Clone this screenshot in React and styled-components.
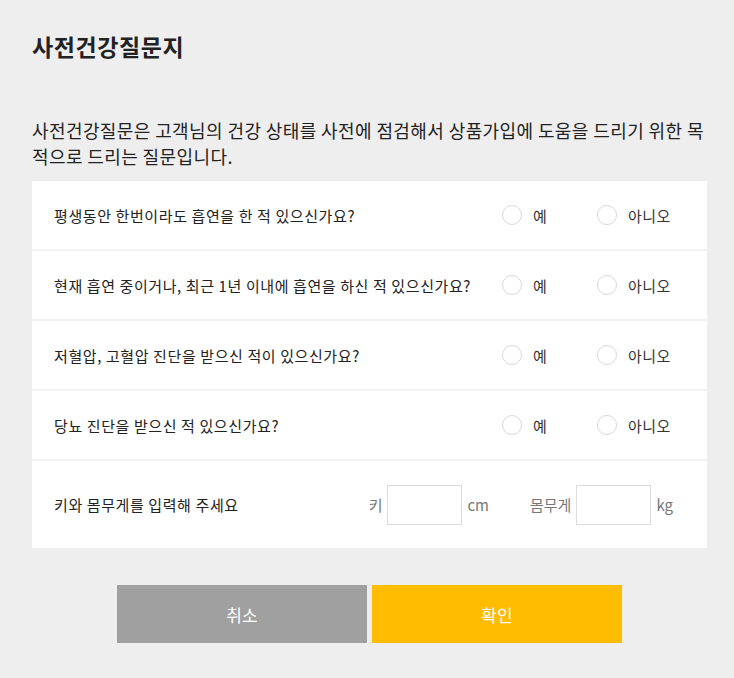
import React, { useState } from 'react';
import styled, { createGlobalStyle } from 'styled-components';

const GlobalStyle = createGlobalStyle`
  body {
    margin: 0;
    background: #eeeeee;
    font-family: "Noto Sans CJK KR", "Noto Sans", sans-serif;
    color: #222;
  }
`;

const QUESTIONS = [
  '평생동안 한번이라도 흡연을 한 적 있으신가요?',
  '현재 흡연 중이거나, 최근 1년 이내에 흡연을 하신 적 있으신가요?',
  '저혈압, 고혈압 진단을 받으신 적이 있으신가요?',
  '당뇨 진단을 받으신 적 있으신가요?',
];

export default function App() {
  const [answers, setAnswers] = useState({});

  return (
    <Page>
      <GlobalStyle />
      <Title>사전건강질문지</Title>
      <Desc>
        사전건강질문은 고객님의 건강 상태를 사전에 점검해서 상품가입에 도움을 드리기 위한 목적으로 드리는 질문입니다.
      </Desc>
      <Card>
        {QUESTIONS.map((q, i) => (
          <Row key={i}>
            <Question>{q}</Question>
            <Options>
              <Option wide>
                <Radio
                  type="radio"
                  name={`q${i}`}
                  checked={answers[i] === 'y'}
                  onChange={() => setAnswers({ ...answers, [i]: 'y' })}
                />
                예
              </Option>
              <Option>
                <Radio
                  type="radio"
                  name={`q${i}`}
                  checked={answers[i] === 'n'}
                  onChange={() => setAnswers({ ...answers, [i]: 'n' })}
                />
                아니오
              </Option>
            </Options>
          </Row>
        ))}
        <Row tall>
          <Question>키와 몸무게를 입력해 주세요</Question>
          <Measures>
            <Unit>키</Unit>
            <NumInput />
            <Unit>cm</Unit>
            <Unit spaced>몸무게</Unit>
            <NumInput />
            <Unit>kg</Unit>
          </Measures>
        </Row>
      </Card>
      <Buttons>
        <Button>취소</Button>
        <Button primary>확인</Button>
      </Buttons>
    </Page>
  );
}

const Page = styled.div`
  width: 675px;
  padding: 31px 27px 35px 32px;
`;

const Title = styled.h1`
  margin: 0;
  font-size: 23px;
  line-height: 30px;
  font-weight: 700;
  color: #222;
  letter-spacing: 0.6px;
`;

const Desc = styled.p`
  margin: 56px 0 12px;
  font-size: 18px;
  line-height: 26px;
  color: #222;
  letter-spacing: 0.4px;
  word-break: break-all;
`;

const Card = styled.div`
  background: #fff;
`;

const Row = styled.div`
  display: flex;
  align-items: center;
  height: ${props => (props.tall ? '87px' : '68px')};
  padding: 0 0 0 22px;
  border-bottom: ${props => (props.tall ? 'none' : '2px solid #f2f2f2')};
`;

const Question = styled.div`
  flex: 1;
  font-size: 15px;
  color: #222;
  letter-spacing: 0.6px;
`;

const Options = styled.div`
  display: flex;
  width: 170px;
  margin-right: 35px;
`;

const Option = styled.label`
  display: flex;
  align-items: center;
  gap: 11px;
  width: ${props => (props.wide ? '95px' : '75px')};
  font-size: 15px;
  letter-spacing: 0.4px;
  color: #333;
  cursor: pointer;
`;

const Radio = styled.input`
  appearance: none;
  margin: 0;
  width: 20px;
  height: 20px;
  border: 1px solid #d9d9d9;
  border-radius: 50%;
  background: #fff;
  box-sizing: border-box;
  cursor: pointer;

  &:checked {
    border: 6px solid #ffbc00;
  }
`;

const Measures = styled.div`
  display: flex;
  align-items: center;
  gap: 5px;
  margin-right: 34px;
`;

const Unit = styled.span`
  font-size: 15px;
  color: #777;
  margin-left: ${props => (props.spaced ? '36px' : '0')};
`;

const NumInput = styled.input`
  width: 75px;
  height: 40px;
  box-sizing: border-box;
  border: 1px solid #dcdcdc;
  padding: 0 8px;
  font-size: 15px;
  font-family: inherit;
  outline: none;
`;

const Buttons = styled.div`
  display: flex;
  justify-content: center;
  gap: 5px;
  margin-top: 37px;
`;

const Button = styled.button`
  width: 250px;
  height: 58px;
  border: none;
  background: ${props => (props.primary ? '#ffbc00' : '#a0a0a0')};
  color: #fff;
  font-size: 17px;
  font-family: inherit;
  cursor: pointer;
`;
